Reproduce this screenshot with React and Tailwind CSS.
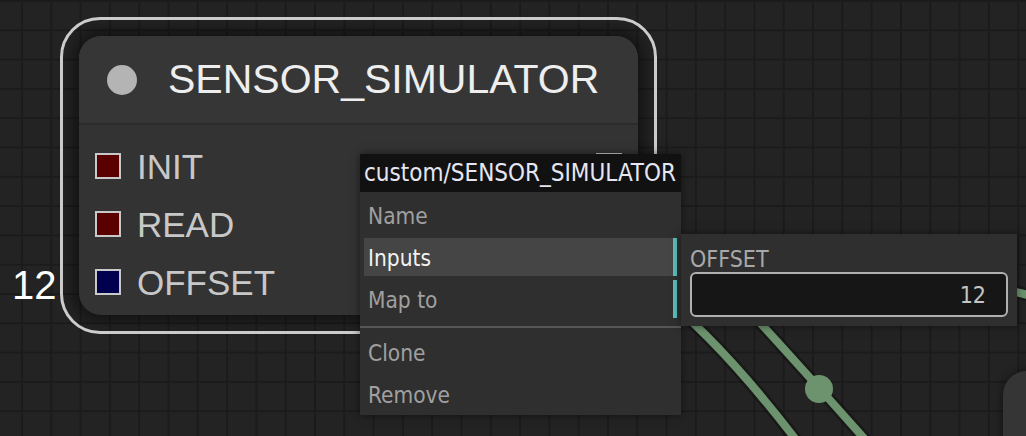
import React from "react";

const menuFont = {
  fontFamily: '"DejaVu Sans", Verdana, sans-serif',
};

function Slot({ label, fill }) {
  return (
    <div className="flex h-[58px] items-center gap-4 pl-4">
      <span className={`h-[26px] w-[26px] border-2 border-[#c8c8c8] ${fill}`} />
      <span className="text-[35px] leading-none text-[#c8c8c8]">{label}</span>
    </div>
  );
}

function MenuItem({ children, active, sub }) {
  return (
    <div
      className={`mx-1 flex h-[38px] items-center pl-1 pt-[3px] text-[22.5px] ${
        active ? "bg-[#454545] text-[#f2f2f2]" : "text-[#a0a0a0]"
      } ${sub ? "border-r-4 border-[#5bbcbc]" : "mr-[13px]"}`}
    >
      {children}
    </div>
  );
}

export default function App() {
  return (
    <div className="relative h-[436px] w-[1026px] overflow-hidden bg-[#232323] font-['Liberation_Sans',Arial,sans-serif]">
      {/* canvas grid and links */}
      <svg className="absolute inset-0" width="1026" height="436">
        <defs>
          <pattern id="grid" x="21" y="0" width="29.3" height="29.3" patternUnits="userSpaceOnUse">
            <rect x="0" y="0" width="2" height="29.3" fill="#1b1b1b" />
            <rect x="0" y="0" width="29.3" height="2" fill="#1b1b1b" />
          </pattern>
        </defs>
        <rect width="1026" height="436" fill="url(#grid)" />
        <g fill="none" strokeLinecap="round">
          <path d="M 655 290 Q 720 340 800 445" stroke="#121212" strokeOpacity="0.6" strokeWidth="13" />
          <path d="M 730 290 Q 790 355 870 445" stroke="#121212" strokeOpacity="0.6" strokeWidth="13" />
          <path d="M 1005 290 Q 1018 292 1035 297" stroke="#121212" strokeOpacity="0.6" strokeWidth="13" />
          <path d="M 655 290 Q 720 340 800 445" stroke="#6c936e" strokeWidth="8" />
          <path d="M 730 290 Q 790 355 870 445" stroke="#6c936e" strokeWidth="8" />
          <path d="M 1005 290 Q 1018 292 1035 297" stroke="#6c936e" strokeWidth="8" />
        </g>
        <circle cx="819" cy="389" r="14" fill="#6c936e" />
      </svg>

      {/* neighbouring node, bottom right */}
      <div className="absolute left-[1003px] top-[371px] h-[100px] w-[60px] rounded-tl-[24px] bg-[#353535] shadow-[0_0_10px_rgba(0,0,0,0.5)]" />

      {/* widget value beside the OFFSET input */}
      <div className="absolute left-[12px] top-[265px] text-[40px] leading-none text-white">12</div>

      {/* selected node */}
      <div className="absolute left-[60px] top-[17px] h-[317px] w-[597px] rounded-[40px] border-[3px] border-[#cfcfcf] p-4">
        <div className="flex h-full flex-col overflow-hidden rounded-[22px] bg-[#333333] shadow-[0_0_14px_6px_rgba(0,0,0,0.45)]">
          <div className="flex h-[89px] shrink-0 items-center gap-[31px] border-b-2 border-[#2b2b2b] bg-[#363636] pl-7">
            <span className="h-[30px] w-[30px] rounded-full bg-[#b4b4b4]" />
            <span className="text-[41px] leading-none text-[#eeeeee]">SENSOR_SIMULATOR</span>
          </div>
          <div className="relative flex flex-col pt-3">
            <div className="absolute right-4 top-3 flex h-[58px] items-center">
              <span className="h-[26px] w-[26px] border-2 border-[#c8c8c8] bg-[#8a8a8a]" />
            </div>
            <Slot label="INIT" fill="bg-[#5b0000]" />
            <Slot label="READ" fill="bg-[#5b0000]" />
            <Slot label="OFFSET" fill="bg-[#00004f]" />
          </div>
        </div>
      </div>

      {/* node context menu */}
      <div
        className="absolute left-[360px] top-[154px] w-[321px] bg-[#2f2f2f] pb-[2px] shadow-[0_0_8px_rgba(0,0,0,0.5)] [font-stretch:condensed]"
        style={menuFont}
      >
        <div className="flex h-[38px] items-center bg-[#111111] pl-1 text-[24px] text-[#e6e6f2]">
          custom/SENSOR_SIMULATOR
        </div>
        <div className="flex flex-col gap-1 pt-1">
          <MenuItem>Name</MenuItem>
          <MenuItem active sub>
            Inputs
          </MenuItem>
          <MenuItem sub>Map to</MenuItem>
        </div>
        <div className="mt-2 h-[2px] bg-[#565656]" />
        <div className="flex flex-col gap-1 pt-[5px]">
          <MenuItem>Clone</MenuItem>
          <MenuItem>Remove</MenuItem>
        </div>
      </div>

      {/* inputs submenu */}
      <div
        className="absolute left-[681px] top-[234px] flex h-[92px] w-[336px] flex-col bg-[#2f2f2f] px-[9px] pt-[12px] shadow-[0_0_8px_rgba(0,0,0,0.5)] [font-stretch:condensed]"
        style={menuFont}
      >
        <div className="text-[23px] leading-[26px] text-[#a8a8a8]">OFFSET</div>
        <div className="flex h-[45px] items-center justify-end rounded-[6px] border-2 border-[#b0b0b0] bg-[#161616] pr-5 pt-[2px] text-[23px] text-[#c4c4c4]">
          12
        </div>
      </div>
    </div>
  );
}
